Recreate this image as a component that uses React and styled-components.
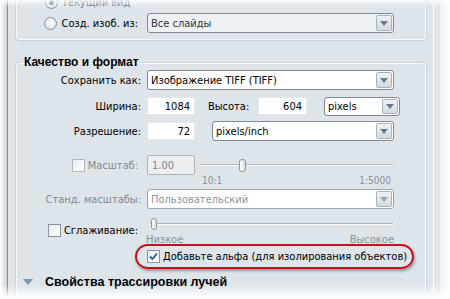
import React from 'react';
import styled, { createGlobalStyle } from 'styled-components';

const Global = createGlobalStyle`
  html, body { margin: 0; padding: 0; background: #fff; }
  body {
    font-family: "DejaVu Sans", "Liberation Sans", Arial, sans-serif;
    font-stretch: condensed;
    font-size: 11px;
    color: #000;
  }
`;

const Frame = styled.div`
  position: relative;
  width: 450px;
  height: 299px;
  overflow: hidden;
  display: flex;
  background: #fff;
`;

const LeftShade = styled.div`
  width: 7px;
  flex: none;
  background: linear-gradient(to right, #ffffff, #cdd2d6);
`;

const Panel = styled.div`
  width: 426px;
  flex: none;
  box-sizing: border-box;
  border-left: 1px solid #858e96;
  background: #dde4ea;
  padding: 0 6px 0 7px;
`;

const RightEdge = styled.div`
  flex: 1;
  background: linear-gradient(to right, #fbfcfd 0 1px, #e1e6ea 1px 7px, #eef1f4 7px, #ffffff 100%);
`;

const FadeBottom = styled.div`
  position: absolute;
  left: 0; right: 0; bottom: 0;
  height: 14px;
  background: linear-gradient(to bottom, rgba(255,255,255,0), #ffffff 90%);
  pointer-events: none;
`;

const FadeTop = styled.div`
  position: absolute;
  left: 0; right: 0; top: 0;
  height: 7px;
  background: linear-gradient(to top, rgba(255,255,255,0), rgba(255,255,255,0.85));
  pointer-events: none;
`;

const TopBox = styled.div`
  margin-top: -8px;
  border: 1px solid #cbd3da;
  border-top: none;
  border-radius: 0 0 4px 4px;
  box-shadow: inset 1px 0 0 #f7f9fa, inset -1px -1px 0 #f7f9fa;
  padding: 0 0 7px 0;
  display: flex;
  flex-direction: column;
  gap: 1px;
`;

const Group = styled.fieldset`
  margin: 13px 0 0 0;
  padding: 0 0 40px 0;
  min-width: 0;
  border: 1px solid #cbd3da;
  border-bottom: none;
  border-radius: 4px 4px 0 0;
  box-shadow: inset 1px 1px 0 #f7f9fa, inset -1px 0 0 #f7f9fa;
`;

const Legend = styled.legend`
  margin-left: 5px;
  padding: 0 3px;
  font-family: "Liberation Sans", Arial, sans-serif;
  font-stretch: normal;
  font-weight: bold;
  font-size: 12px;
  line-height: 16px;
`;

const Row = styled.div`
  display: grid;
  grid-template-columns: 125px 1fr;
  column-gap: 6px;
  align-items: center;
  height: ${p => p.h || 20}px;
  margin-top: ${p => p.mt || 0}px;
`;

const Label = styled.div`
  justify-self: end;
  display: flex;
  align-items: center;
  gap: ${p => p.gap ?? 3}px;
  margin-right: ${p => p.mr || 0}px;
  white-space: nowrap;
  color: ${p => (p.disabled ? '#7e8994' : '#000')};
`;

const Controls = styled.div`
  display: flex;
  align-items: center;
  min-width: 0;
`;

const SelectBox = styled.div`
  box-sizing: border-box;
  width: ${p => p.w}px;
  height: ${p => p.h || 20}px;
  margin-left: ${p => p.ml || 0}px;
  flex: none;
  display: flex;
  align-items: center;
  border: 1px solid ${p => (p.disabled ? '#9aa4ad' : '#7f8a94')};
  border-radius: 3px;
  background: ${p => (p.muted ? '#edf1f4' : '#ffffff')};
  color: ${p => (p.disabled ? '#8a949d' : p.muted ? '#333' : '#000')};
  padding-left: 3px;
  overflow: hidden;
  white-space: nowrap;
`;

const SelectText = styled.span`
  flex: 1;
  overflow: hidden;
`;

const ArrowBtn = styled.span`
  flex: none;
  width: 14px;
  align-self: stretch;
  margin: 1px;
  border: 1px solid #a9b3bb;
  border-radius: 2px;
  background: linear-gradient(to bottom, #eef2f5, #d3dbe1);
  display: flex;
  align-items: center;
  justify-content: center;
  &::after {
    content: '';
    border-left: 4px solid transparent;
    border-right: 4px solid transparent;
    border-top: 5px solid ${p => (p.disabled ? '#9ba6b0' : '#6a7a88')};
  }
`;

const Select = ({ children, ...rest }) => (
  <SelectBox {...rest}>
    <SelectText>{children}</SelectText>
    <ArrowBtn disabled={rest.disabled} />
  </SelectBox>
);

const Field = styled.input`
  box-sizing: border-box;
  width: ${p => p.w || 48}px;
  height: ${p => p.h || 18}px;
  margin: 0 0 0 ${p => p.ml || 0}px;
  flex: none;
  font: inherit;
  border: 1px solid ${p => (p.disabled ? '#aeb6bd' : '#e4e8ec')};
  border-radius: ${p => (p.disabled ? '2px' : '0')};
  background: ${p => (p.disabled ? '#eceef0' : '#ffffff')};
  color: ${p => (p.disabled ? '#7c858e' : '#000')};
  text-align: ${p => (p.disabled ? 'left' : 'right')};
  padding: 0 4px;
  outline: none;
`;

const InlineLabel = styled.span`
  width: ${p => p.w}px;
  margin-left: ${p => p.ml || 0}px;
  flex: none;
  white-space: nowrap;
`;

const Radio = styled.span`
  width: 13px;
  height: 13px;
  box-sizing: border-box;
  flex: none;
  border-radius: 50%;
  border: 1px solid #8a939b;
  background: radial-gradient(circle at 50% 40%, #ffffff, #d3d9de);
  display: flex;
  align-items: center;
  justify-content: center;
  &::after {
    content: '';
    display: ${p => (p.checked ? 'block' : 'none')};
    width: 5px;
    height: 5px;
    border-radius: 50%;
    background: #4a6f96;
  }
`;

const CheckBox = styled.span`
  width: 13px;
  height: 13px;
  box-sizing: border-box;
  flex: none;
  border: 1px solid ${p => (p.disabled ? '#b0b7be' : '#8a939b')};
  background: linear-gradient(135deg, #e6eaee, #ffffff);
  display: flex;
  align-items: center;
  justify-content: center;
`;

const Check = ({ checked, disabled }) => (
  <CheckBox disabled={disabled}>
    {checked && (
      <svg width="9" height="9" viewBox="0 0 9 9">
        <path d="M1 4.5 L3.5 7 L8 1.5" fill="none" stroke="#2c55a3" strokeWidth="1.8" />
      </svg>
    )}
  </CheckBox>
);

const RadioRow = styled.div`
  display: flex;
  align-items: center;
  gap: 4px;
  height: 20px;
  padding-left: 29px;
  color: ${p => (p.dim ? '#5f6870' : '#000')};
`;

const Slider = styled.div`
  position: relative;
  width: ${p => p.w}px;
  height: ${p => p.h || 20}px;
  margin-left: ${p => p.ml || 0}px;
  flex: none;
  &::before {
    content: '';
    position: absolute;
    left: 0; right: 0;
    top: ${p => p.line}px;
    height: 1px;
    background: #aeb7bf;
    box-shadow: 0 1px 0 #f6f8f9;
  }
`;

const Thumb = styled.span`
  position: absolute;
  top: ${p => p.top}px;
  width: ${p => p.tw || 7}px;
  height: ${p => p.th || 13}px;
  box-sizing: border-box;
  border: 1px solid #8f989f;
  border-radius: 3px;
  background: linear-gradient(to right, #ffffff, #d8dee3);
`;

const Ticks = styled.div`
  display: flex;
  justify-content: space-between;
  width: ${p => p.w}px;
  margin-left: ${p => p.ml || 0}px;
  padding-left: ${p => p.pl || 0}px;
  box-sizing: border-box;
  font-size: ${p => p.fs || 10}px;
  line-height: 12px;
  color: #8a939b;
`;

const SmoothCol = styled.div`
  display: flex;
  flex-direction: column;
`;

const AlphaRow = styled.div`
  display: flex;
  margin-top: -2px;
  padding-left: 119px;
`;

const Ellipse = styled.div`
  box-sizing: border-box;
  height: 25px;
  display: flex;
  align-items: center;
  gap: 3px;
  padding: 0 5px 0 10px;
  border: 2px solid #c4121c;
  border-radius: 13px;
  box-shadow: 1px 2px 3px rgba(0, 0, 0, 0.35);
  white-space: nowrap;
`;

const Section = styled.div`
  display: flex;
  align-items: center;
  height: 16px;
  margin-top: 5px;
  padding-left: 7px;
  gap: 12px;
  font-family: "Liberation Sans", Arial, sans-serif;
  font-stretch: normal;
  font-weight: bold;
  font-size: 12.5px;
  white-space: nowrap;
`;

const Tri = styled.span`
  width: 0;
  height: 0;
  border-left: 5px solid transparent;
  border-right: 5px solid transparent;
  border-top: 6px solid #8096ab;
`;

export default function App() {
  return (
    <Frame>
      <Global />
      <LeftShade />
      <Panel>
        <TopBox>
          <RadioRow dim>
            <Radio checked />
            <span>Текущий вид</span>
          </RadioRow>
          <Row>
            <Label mr={3} gap={4}>
              <Radio />
              <span>Созд. изоб. из:</span>
            </Label>
            <Controls>
              <Select w={247} muted>Все слайды</Select>
            </Controls>
          </Row>
        </TopBox>

        <Group>
          <Legend>Качество и формат</Legend>
          <Row>
            <Label>Сохранить как:</Label>
            <Controls>
              <Select w={247}>Изображение TIFF (TIFF)</Select>
            </Controls>
          </Row>
          <Row mt={6}>
            <Label>Ширина:</Label>
            <Controls>
              <Field readOnly value="1084" />
              <InlineLabel w={45} ml={13}>Высота:</InlineLabel>
              <Field readOnly value="604" w={49} ml={5} />
              <Select w={76} h={19} ml={17}>pixels</Select>
            </Controls>
          </Row>
          <Row mt={5}>
            <Label>Разрешение:</Label>
            <Controls>
              <Field readOnly value="72" />
              <Select w={182} ml={17}>pixels/inch</Select>
            </Controls>
          </Row>
          <Row mt={14}>
            <Label disabled mr={3}>
              <Check disabled />
              <span>Масштаб:</span>
            </Label>
            <Controls>
              <Field readOnly disabled value="1.00" h={20} />
              <Slider w={194} ml={4} line={9}>
                <Thumb top={4} style={{ left: 40 }} />
              </Slider>
            </Controls>
          </Row>
          <Row h={12}>
            <span />
            <Ticks w={244} pl={55}>
              <span>10:1</span>
              <span>1:5000</span>
            </Ticks>
          </Row>
          <Row mt={2}>
            <Label disabled>Станд. масштабы:</Label>
            <Controls>
              <Select w={247} disabled>Пользовательский</Select>
            </Controls>
          </Row>
          <Row mt={6} h={31}>
            <Label mr={3}>
              <Check />
              <span>Сглаживание:</span>
            </Label>
            <SmoothCol>
              <Slider w={243} ml={3} h={19} line={8}>
                <Thumb top={3} tw={6} th={12} style={{ left: 1 }} />
              </Slider>
              <Ticks w={248} ml={-1} fs={11}>
                <span>Низкое</span>
                <span>Высокое</span>
              </Ticks>
            </SmoothCol>
          </Row>
          <AlphaRow>
            <Ellipse>
              <Check checked />
              <span>Добавьте альфа (для изолирования объектов)</span>
            </Ellipse>
          </AlphaRow>
          <Section>
            <Tri />
            <span>Свойства трассировки лучей</span>
          </Section>
        </Group>
      </Panel>
      <RightEdge />
      <FadeTop />
      <FadeBottom />
    </Frame>
  );
}
